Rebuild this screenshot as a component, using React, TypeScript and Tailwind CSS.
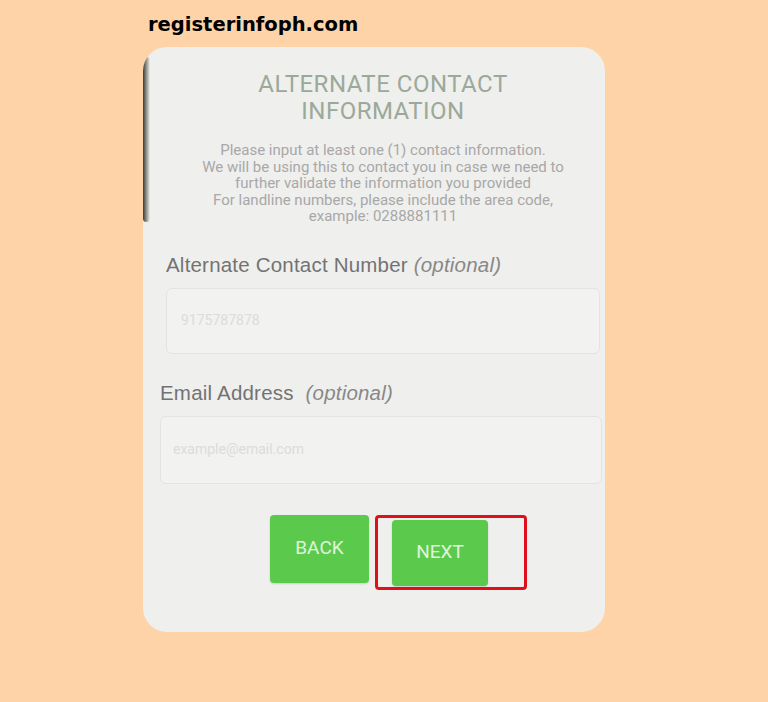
import React from "react";

export default function App() {
  return (
    <div className="min-h-[702px] w-[768px] bg-[#fed3a8] overflow-hidden" style={{ fontFamily: "Roboto, 'Liberation Sans', sans-serif" }}>
      <div className="pl-[148px] pt-[10px] h-[47px]">
        <span className="text-[19.5px] font-bold text-black" style={{ fontFamily: "'DejaVu Sans', sans-serif" }}>registerinfoph.com</span>
      </div>
      <div className="relative ml-[143px] w-[462px] h-[585px] rounded-[24px] bg-[#efefed] overflow-hidden">
        <div className="absolute left-0 top-[10px] h-[165px] w-[7px] bg-gradient-to-r from-[#3a3a30] to-transparent rounded-full" />
        <div className="flex flex-col items-center pt-[24px] pl-[18px]">
          <h1 className="text-center text-[24px] leading-[27px] text-[#9aa99a] tracking-[0.5px]">ALTERNATE CONTACT<br />INFORMATION</h1>
          <p className="mt-[17px] text-center text-[15px] leading-[16.5px] text-[#a8a8a8]">
            Please input at least one (1) contact information.<br />
            We will be using this to contact you in case we need to<br />
            further validate the information you provided<br />
            For landline numbers, please include the area code,<br />
            example: 0288881111
          </p>
        </div>
        <div className="mt-[29px] pl-[23px] pr-[5px]">
          <div className="text-[20.5px] tracking-[0.2px] text-[#737373] leading-[22px]" style={{ fontFamily: "'Liberation Sans', sans-serif" }}>Alternate Contact Number <span className="italic text-[#888]">(optional)</span></div>
          <div className="mt-[12px] h-[66px] rounded-[6px] border border-[#e3e3e1] bg-[#f2f2f0] flex items-center px-[14px]">
            <span className="text-[14px] text-[#dcdcda]">9175787878</span>
          </div>
        </div>
        <div className="mt-[28px] pl-[17px] pr-[3px]">
          <div className="text-[20.5px] tracking-[0.2px] text-[#737373] leading-[22px]" style={{ fontFamily: "'Liberation Sans', sans-serif" }}>Email Address <span className="italic text-[#888] ml-[6px]">(optional)</span></div>
          <div className="mt-[12px] h-[68px] rounded-[6px] border border-[#e3e3e1] bg-[#f2f2f0] flex items-center px-[12px]">
            <span className="text-[14px] text-[#dcdcda]">example@email.com</span>
          </div>
        </div>
        <div className="mt-[31px] flex items-start pl-[127px]">
          <button className="w-[99px] h-[68px] rounded-[4px] bg-[#5bc94b] text-white/80 text-[19px] shadow-[0_1px_2px_rgba(0,0,0,0.15)]">BACK</button>
          <div className="ml-[6px] w-[152px] h-[75px] border-[3px] border-[#e0101a] rounded-[4px] pl-[14px] pt-[2px]">
            <button className="w-[96px] h-[66px] rounded-[4px] bg-[#5bc94b] text-white/80 text-[19px] shadow-[0_1px_2px_rgba(0,0,0,0.15)]">NEXT</button>
          </div>
        </div>
      </div>
    </div>
  );
}
